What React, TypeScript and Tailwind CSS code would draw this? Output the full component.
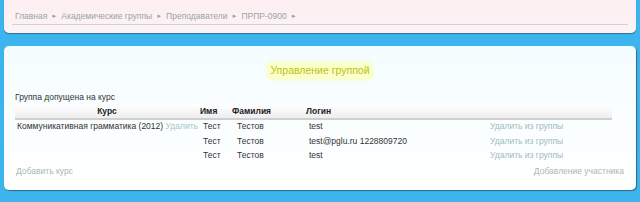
export default function App() {
  const rows = [
    { course: true, name: 'Тест', last: 'Тестов', login: 'test' },
    { course: false, name: 'Тест', last: 'Тестов', login: 'test@pglu.ru 1228809720' },
    { course: false, name: 'Тест', last: 'Тестов', login: 'test' },
  ];
  const crumbs = ['Главная', 'Академические группы', 'Преподаватели', 'ПРПР-0900'];

  return (
    <div className="w-[640px] h-[202px] bg-[#3cb4ee] overflow-hidden flex flex-col text-[8.5px] font-['Liberation_Sans',Arial,sans-serif] text-[#333]">
      {/* breadcrumb panel */}
      <div className="mx-[4px] h-[33px] rounded-b-[5px] bg-gradient-to-b from-[#fdeef0] to-[#fbf4f7] shadow-[0_1px_1px_#2f6f99] px-[8px] pt-[9px]">
        <div className="flex items-center gap-[4px] h-[16px] border-b border-[#d9cfd2] px-[3px] text-[#9aa4a8]">
          {crumbs.map((c) => (
            <span key={c} className="flex items-center gap-[4px]">
              <span>{c}</span>
              <span className="text-[6px]">►</span>
            </span>
          ))}
        </div>
      </div>

      {/* main panel */}
      <div className="mt-[13px] mx-[4px] h-[144px] rounded-[5px] bg-gradient-to-b from-[#f4fdff] to-white shadow-[1px_1px_1px_#2c6a86] px-[11px] pt-[17px]">
        <div className="flex justify-center">
          <span className="text-[10.5px] text-[#b9c21a] bg-[#fbffc8] px-[2px] shadow-[0_0_4px_#f4ffa0]">Управление группой</span>
        </div>
        <div className="mt-[12px]">Группа допущена на курс</div>
        <div className="w-[597px] mt-[1px]">
          <div className="grid grid-cols-[184px_33px_74px_180px_1fr] h-[15px] items-center font-bold text-[#222] bg-gradient-to-b from-white to-[#eeeeee] border-b-2 border-[#cfcfcf]">
            <span className="text-center">Курс</span>
            <span className="pl-[1px]">Имя</span>
            <span>Фамилия</span>
            <span>Логин</span>
            <span />
          </div>
          {rows.map((r, i) => (
            <div key={i} className="grid grid-cols-[188px_34px_72px_181px_1fr] h-[14.5px] items-center">
              <span className="pl-[2px] whitespace-nowrap">
                {r.course && (
                  <>
                    Коммуникативная грамматика (2012) <span className="text-[#a6c8c4]">Удалить</span>
                  </>
                )}
              </span>
              <span>{r.name}</span>
              <span>{r.last}</span>
              <span>{r.login}</span>
              <span className="text-[#9fbcbc]">Удалить из группы</span>
            </div>
          ))}
        </div>
        <div className="flex justify-between mt-[2px] text-[#a8b8b8]">
          <span className="pl-[1px]">Добавить курс</span>
          <span className="pr-[1px]">Добавление участника</span>
        </div>
      </div>
    </div>
  );
}
